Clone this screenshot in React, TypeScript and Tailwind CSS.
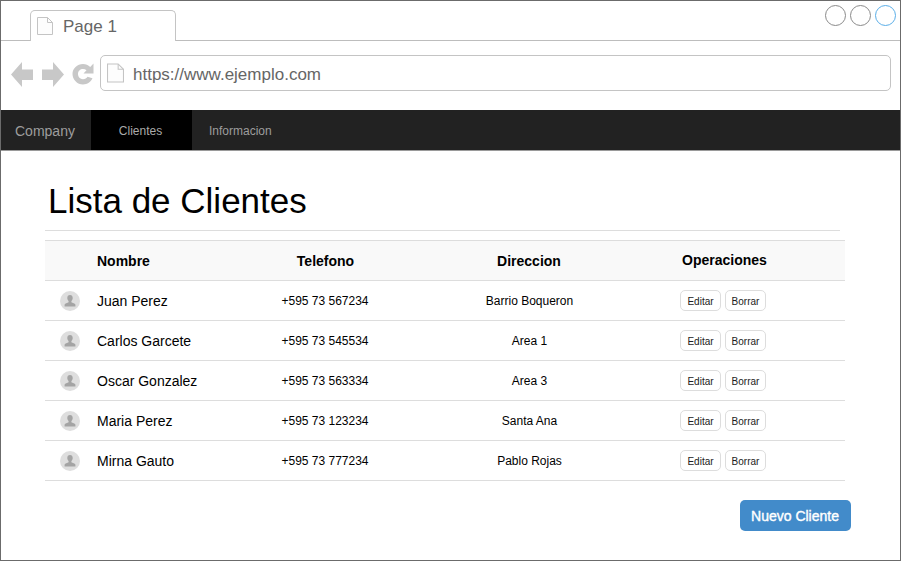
const rows = [
  ["Juan Perez", "+595 73 567234", "Barrio Boqueron"],
  ["Carlos Garcete", "+595 73 545534", "Area 1"],
  ["Oscar Gonzalez", "+595 73 563334", "Area 3"],
  ["Maria Perez", "+595 73 123234", "Santa Ana"],
  ["Mirna Gauto", "+595 73 777234", "Pablo Rojas"],
];

const gridCols = "grid grid-cols-[42px_139px_198px_210px_180px_31px] items-center";

function PageIcon({ className }: { className: string }) {
  return (
    <svg viewBox="0 0 16 18" className={className} fill="#fdfdfd" stroke="#c4c4c4" strokeWidth="1">
      <path d="M0.5 0.5H10.5L15.5 5.5V17.5H0.5Z" />
      <path d="M10.5 0.5V5.5H15.5" fill="none" />
    </svg>
  );
}

function Avatar() {
  return (
    <svg viewBox="0 0 20 20" className="ml-[15px] h-5 w-5">
      <circle cx="10" cy="10" r="10" fill="#dedede" />
      <path
        d="M10 4C8.2 4 7.3 5.3 7.3 7C7.3 8.3 7.9 9.4 8.6 10V11.3C7.4 12 5 12.3 4.6 13.6V15.500H15.400V13.600C15 12.300 12.600 12 11.400 11.300V10C12.100 9.400 12.700 8.300 12.700 7C12.700 5.300 11.800 4 10 4Z"
        fill="#a4a4a4"
      />
    </svg>
  );
}

function SmallButton({ label }: { label: string }) {
  return (
    <button className="flex h-[21px] w-[41px] items-center justify-center rounded-[5px] border border-[#dddddd] bg-white pt-px text-[10px] text-[#222222]">
      {label}
    </button>
  );
}

export default function App() {
  return (
    <div className="flex h-[561px] w-[901px] flex-col overflow-hidden border border-[#6b6b6b] bg-white font-['Liberation_Sans',Arial,sans-serif] text-black">
      <div className="relative h-[40px] border-b border-[#bdbdbd] pl-[29px] pt-[9px]">
        <div className="flex h-[31px] w-[146px] items-center gap-[10px] rounded-t-[5px] border border-b-0 border-[#c4c4c4] bg-white pl-[6px]">
          <PageIcon className="h-[18px] w-[16px]" />
          <span className="pt-[2px] text-[17px] text-[#666666]">Page 1</span>
        </div>
        <div className="absolute right-[4px] top-[4px] flex gap-[4px]">
          <span className="h-[21px] w-[21px] rounded-full border border-[#8a8a8a]" />
          <span className="h-[21px] w-[21px] rounded-full border border-[#8a8a8a]" />
          <span className="h-[21px] w-[21px] rounded-full border border-[#5aaee8]" />
        </div>
      </div>

      <div className="flex h-[69px] items-start pl-[10px] pr-[9px] pt-[14px]">
        <div className="flex h-[36px] w-[89px] items-center pt-[2px]">
          <svg viewBox="0 0 22 25" className="h-[25px] w-[22px]" fill="#c8c8c8">
            <path d="M0 12.500L11 0V7.500H22V18H11V25Z" />
          </svg>
          <svg viewBox="0 0 22 25" className="ml-[9px] h-[25px] w-[22px]" fill="#c8c8c8">
            <path d="M22 12.500L11 0V7.500H0V18H11V25Z" />
          </svg>
          <svg viewBox="0 0 22 22" className="ml-[8px] h-[22px] w-[22px]" fill="#c8c8c8">
            <path d="M11 1C5.200 1 0.500 5.500 0.500 11S5.200 21.500 11 21.500C15.300 21.500 19 19 20.500 15.300L15.500 13.700C14.700 15.200 13 16.200 11 16.200C8.200 16.200 6 14 6 11S8.200 6 11 6C12.400 6 13.600 6.400 14.500 7.200L11.500 10.500H21.500V0.500L18.200 3.900C16.300 2.100 13.800 1 11 1Z" />
          </svg>
        </div>
        <div className="flex h-[36px] flex-1 items-center gap-[9px] rounded-[5px] border border-[#c4c4c4] pl-[6px]">
          <PageIcon className="h-[20px] w-[17px]" />
          <span className="pt-[4px] text-[17px] text-[#666666]">https://www.ejemplo.com</span>
        </div>
      </div>

      <nav className="flex h-[41px] items-stretch border-b border-[#9a9a9a] bg-[#222222]">
        <div className="flex w-[90px] items-center pl-[14px] pt-[2px] text-[14px] text-[#9d9d9d]">Company</div>
        <div className="flex w-[101px] items-center justify-center bg-black pr-[2px] pt-[2px] text-[12px] text-[#aaaaaa]">Clientes</div>
        <div className="flex items-center pl-[17px] pt-[2px] text-[12px] text-[#9d9d9d]">Informacion</div>
      </nav>

      <main className="flex flex-1 flex-col pl-[44px]">
        <h1 className="ml-[3px] mt-[28px] h-[51px] text-[35px] leading-[43px]">Lista de Clientes</h1>
        <div className="h-px w-[795px] bg-[#dddddd]" />

        <div className={`${gridCols} mt-[9px] h-[41px] w-[800px] border-y border-[#dddddd] bg-[#f9f9f9] text-[14px] font-bold`}>
          <span />
          <span className="pl-[10px] pt-[2px]">Nombre</span>
          <span className="pl-[1px] pt-[2px] text-center">Telefono</span>
          <span className="pt-[2px] text-center">Direccion</span>
          <span className="pl-[1px] text-center">Operaciones</span>
          <span />
        </div>

        {rows.map(([name, phone, address]) => (
          <div key={name} className={`${gridCols} h-[40px] w-[800px] border-b border-[#dddddd]`}>
            <Avatar />
            <span className="pl-[10px] pt-[2px] text-[14px]">{name}</span>
            <span className="text-center text-[12px]">{phone}</span>
            <span className="pl-[1px] text-center text-[12px]">{address}</span>
            <div className="flex justify-center gap-[4px] pr-[2px]">
              <SmallButton label="Editar" />
              <SmallButton label="Borrar" />
            </div>
            <span />
          </div>
        ))}

        <div className="mt-[19px] flex w-[806px] justify-end">
          <button className="flex h-[31px] w-[111px] items-center justify-center rounded-[5px] bg-[#428bca] pr-px pt-[1px] text-[14px] text-white [-webkit-text-stroke:0.4px_white]">
            Nuevo Cliente
          </button>
        </div>
      </main>
    </div>
  );
}
